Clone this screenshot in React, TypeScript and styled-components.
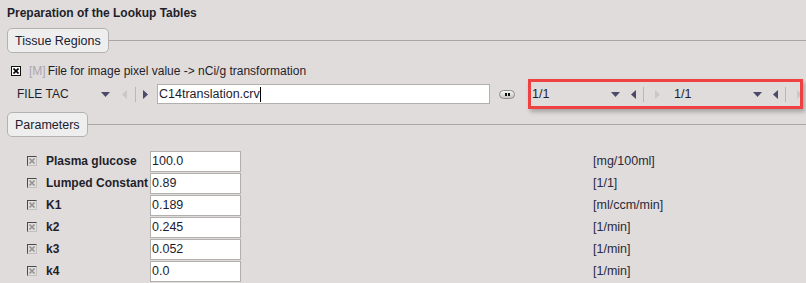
import React from "react";
import styled, { createGlobalStyle } from "styled-components";

const GlobalStyle = createGlobalStyle`
  html, body {
    margin: 0;
    padding: 0;
    background: #e0dcdb;
  }
  body {
    font-family: "Liberation Sans", Arial, sans-serif;
    font-size: 12px;
    color: #1f1f2b;
  }
`;

type Param = { label: string; value: string; unit: string };

const params: Param[] = [
  { label: "Plasma glucose", value: "100.0", unit: "[mg/100ml]" },
  { label: "Lumped Constant", value: "0.89", unit: "[1/1]" },
  { label: "K1", value: "0.189", unit: "[ml/ccm/min]" },
  { label: "k2", value: "0.245", unit: "[1/min]" },
  { label: "k3", value: "0.052", unit: "[1/min]" },
  { label: "k4", value: "0.0", unit: "[1/min]" },
];

export default function App() {
  return (
    <>
      <GlobalStyle />
      <Page>
        <Title>Preparation of the Lookup Tables</Title>

        <Section>
          <Tab>Tissue Regions</Tab>
          <Rule />
        </Section>

        <CheckRow>
          <CheckBox $active>
            <Cross />
          </CheckBox>
          <Marker>[M]</Marker>
          <span>File for image pixel value -&gt; nCi/g transformation</span>
        </CheckRow>

        <FileRow>
          <FileLabel>FILE TAC</FileLabel>
          <Arrow dir="down" w={20} />
          <Arrow dir="left" w={18} disabled />
          <Divider />
          <Arrow dir="right" w={10} />
          <FileInput>
            C14translation.crv<Caret />
          </FileInput>
          <MoreButton>
            <Dot />
            <Dot />
          </MoreButton>
          <Highlight>
            {[0, 1].map((i) => (
              <Pager key={i}>
                <PagerValue>1/1</PagerValue>
                <Arrow dir="down" w={20} />
                <Arrow dir="left" w={16} />
                <Divider />
                <Arrow dir="right" w={18} disabled />
              </Pager>
            ))}
          </Highlight>
        </FileRow>

        <Section $top={3}>
          <Tab>Parameters</Tab>
          <Rule />
        </Section>

        <ParamGrid>
          {params.map((p) => (
            <React.Fragment key={p.label}>
              <CheckBox>
                <Cross />
              </CheckBox>
              <ParamLabel>{p.label}</ParamLabel>
              <ValueBox>{p.value}</ValueBox>
              <Unit>{p.unit}</Unit>
            </React.Fragment>
          ))}
        </ParamGrid>
      </Page>
    </>
  );
}

function Cross() {
  return (
    <svg width="6" height="6" viewBox="0 0 6 6">
      <path d="M0.5 0.5 L5.5 5.5 M5.5 0.5 L0.5 5.5" stroke="currentColor" strokeWidth="1.7" />
    </svg>
  );
}

function Arrow({ dir, w, disabled }: { dir: "down" | "left" | "right"; w: number; disabled?: boolean }) {
  const color = disabled ? "#c9c7ca" : "#4b4a68";
  if (dir === "down") {
    return (
      <ArrowBox $w={w}>
        <svg width="9" height="5" viewBox="0 0 9 5">
          <polygon points="0,0 9,0 4.5,5" fill={color} />
        </svg>
      </ArrowBox>
    );
  }
  return (
    <ArrowBox $w={w}>
      <svg width="5" height="9" viewBox="0 0 5 9">
        <polygon points={dir === "left" ? "5,0 5,9 0,4.5" : "0,0 0,9 5,4.5"} fill={color} />
      </svg>
    </ArrowBox>
  );
}

const Page = styled.div`
  width: 806px;
  height: 283px;
  overflow: hidden;
  padding: 6px 0 0 7px;
  box-sizing: border-box;
`;

const Title = styled.div`
  font-weight: bold;
  font-size: 12px;
  height: 15px;
  line-height: 15px;
`;

const Section = styled.div<{ $top?: number }>`
  display: flex;
  align-items: center;
  margin-top: ${(p) => p.$top ?? 7}px;
`;

const Tab = styled.div`
  height: 23px;
  padding: 0 7px;
  display: flex;
  align-items: center;
  background: #efeeee;
  border: 1px solid #b4b1b1;
  border-radius: 5px;
  font-size: 12.5px;
  color: #202030;
`;

const Rule = styled.div`
  flex: 1;
  height: 1px;
  background: #a9a6a6;
`;

const CheckRow = styled.div`
  display: flex;
  align-items: center;
  height: 14px;
  margin-top: 11px;
  padding-left: 4px;
  font-size: 12px;
`;

const CheckBox = styled.span<{ $active?: boolean }>`
  width: 8px;
  height: 8px;
  display: inline-flex;
  align-items: center;
  justify-content: center;
  background: ${(p) => (p.$active ? "#ffffff" : "#e2dfdf")};
  border: 1px solid ${(p) => (p.$active ? "#111" : "#c2bfbf")};
  border-top-color: ${(p) => (p.$active ? "#111" : "#4a4a4a")};
  border-left-color: ${(p) => (p.$active ? "#111" : "#4a4a4a")};
  color: ${(p) => (p.$active ? "#000" : "#9a9797")};
`;

const Marker = styled.span`
  color: #a9a7b0;
  margin: 0 2px 0 8px;
`;

const FileRow = styled.div`
  display: flex;
  align-items: center;
  height: 30px;
  margin-top: 1px;
`;

const FileLabel = styled.span`
  width: 88px;
  padding-left: 10px;
  box-sizing: border-box;
  font-size: 12px;
`;

const ArrowBox = styled.span<{ $w: number }>`
  width: ${(p) => p.$w}px;
  flex-shrink: 0;
  height: 16px;
  display: inline-flex;
  align-items: center;
  justify-content: center;
`;

const Divider = styled.span`
  width: 1px;
  height: 15px;
  flex-shrink: 0;
  background: #b9b6b6;
  margin: 0 4px 0 2px;
`;

const FileInput = styled.div`
  width: 333px;
  height: 20px;
  margin-left: 7px;
  box-sizing: border-box;
  border: 1px solid #b2afaf;
  background: #fff;
  padding-left: 1px;
  display: flex;
  align-items: center;
  font-size: 12.5px;
  color: #1c1c30;
`;

const Caret = styled.span`
  width: 1px;
  height: 15px;
  background: #000;
`;

const MoreButton = styled.span`
  width: 14px;
  height: 7px;
  margin-left: 9px;
  border: 1px solid #8d8b8b;
  border-radius: 5px;
  background: linear-gradient(#f6f6f6, #c6c4c4);
  display: inline-flex;
  align-items: center;
  justify-content: center;
  gap: 1px;
`;

const Dot = styled.span`
  width: 2px;
  height: 3px;
  background: #111;
`;

const Highlight = styled.div`
  margin-left: 13px;
  width: 275px;
  height: 30px;
  box-sizing: border-box;
  border: 3px solid #ef4141;
  box-shadow: 2px 3px 4px rgba(0, 0, 0, 0.25);
  display: flex;
  align-items: center;
  overflow: hidden;
  padding-left: 1px;
`;

const Pager = styled.div`
  display: flex;
  align-items: center;
  flex-shrink: 0;
  width: 142px;
`;

const PagerValue = styled.span`
  width: 73px;
  flex-shrink: 0;
  font-size: 12.5px;
`;

const ParamGrid = styled.div`
  display: grid;
  grid-template-columns: 19px 104px 91px 1fr;
  grid-auto-rows: 22px;
  align-items: center;
  margin-top: 13px;
  padding-left: 20px;
`;

const ParamLabel = styled.span`
  font-weight: bold;
  font-size: 12px;
  white-space: nowrap;
`;

const ValueBox = styled.div`
  height: 21px;
  box-sizing: border-box;
  border: 1px solid #b2afaf;
  background: #fff;
  padding-left: 1px;
  display: flex;
  align-items: center;
  font-size: 12.5px;
  color: #1c1c30;
`;

const Unit = styled.span`
  padding-left: 352px;
  font-size: 12.5px;
  color: #2a2a3a;
`;
